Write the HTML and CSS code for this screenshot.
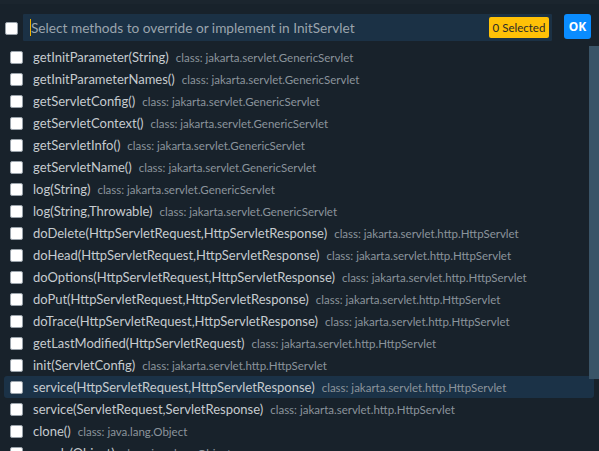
FILE: index.html
```html
<!DOCTYPE html>
<html>
<head>
<meta charset="utf-8">
<link rel="stylesheet" href="styles.css">
</head>
<body>
<div class="top-strip"></div>
<div class="header">
  <span class="cb cb-top"></span>
  <div class="search">
    <span class="caret"></span>
    <span class="placeholder">Select methods to override or implement in InitServlet</span>
    <span class="badge">0 Selected</span>
  </div>
  <button class="ok">OK</button>
</div>
<div class="list-wrap">
  <ul class="list">
    <li class="row"><span class="cb"></span><span class="m">getInitParameter(String)</span><span class="c">class: jakarta.servlet.GenericServlet</span></li>
    <li class="row"><span class="cb"></span><span class="m">getInitParameterNames()</span><span class="c">class: jakarta.servlet.GenericServlet</span></li>
    <li class="row"><span class="cb"></span><span class="m">getServletConfig()</span><span class="c">class: jakarta.servlet.GenericServlet</span></li>
    <li class="row"><span class="cb"></span><span class="m">getServletContext()</span><span class="c">class: jakarta.servlet.GenericServlet</span></li>
    <li class="row"><span class="cb"></span><span class="m">getServletInfo()</span><span class="c">class: jakarta.servlet.GenericServlet</span></li>
    <li class="row"><span class="cb"></span><span class="m">getServletName()</span><span class="c">class: jakarta.servlet.GenericServlet</span></li>
    <li class="row"><span class="cb"></span><span class="m">log(String)</span><span class="c">class: jakarta.servlet.GenericServlet</span></li>
    <li class="row"><span class="cb"></span><span class="m">log(String,Throwable)</span><span class="c">class: jakarta.servlet.GenericServlet</span></li>
    <li class="row"><span class="cb"></span><span class="m">doDelete(HttpServletRequest,HttpServletResponse)</span><span class="c">class: jakarta.servlet.http.HttpServlet</span></li>
    <li class="row"><span class="cb"></span><span class="m">doHead(HttpServletRequest,HttpServletResponse)</span><span class="c">class: jakarta.servlet.http.HttpServlet</span></li>
    <li class="row"><span class="cb"></span><span class="m">doOptions(HttpServletRequest,HttpServletResponse)</span><span class="c">class: jakarta.servlet.http.HttpServlet</span></li>
    <li class="row"><span class="cb"></span><span class="m">doPut(HttpServletRequest,HttpServletResponse)</span><span class="c">class: jakarta.servlet.http.HttpServlet</span></li>
    <li class="row"><span class="cb"></span><span class="m">doTrace(HttpServletRequest,HttpServletResponse)</span><span class="c">class: jakarta.servlet.http.HttpServlet</span></li>
    <li class="row"><span class="cb"></span><span class="m">getLastModified(HttpServletRequest)</span><span class="c">class: jakarta.servlet.http.HttpServlet</span></li>
    <li class="row"><span class="cb"></span><span class="m">init(ServletConfig)</span><span class="c">class: jakarta.servlet.http.HttpServlet</span></li>
    <li class="row active"><span class="cb"></span><span class="m">service(HttpServletRequest,HttpServletResponse)</span><span class="c">class: jakarta.servlet.http.HttpServlet</span></li>
    <li class="row"><span class="cb"></span><span class="m">service(ServletRequest,ServletResponse)</span><span class="c">class: jakarta.servlet.http.HttpServlet</span></li>
    <li class="row"><span class="cb"></span><span class="m">clone()</span><span class="c">class: java.lang.Object</span></li>
    <li class="row"><span class="cb"></span><span class="m">equals(Object)</span><span class="c">class: java.lang.Object</span></li>
  </ul>
  <div class="scrollbar"></div>
</div>
</body>
</html>
```
FILE: styles.css
```css
html, body {
  margin: 0;
  padding: 0;
  height: 100%;
  overflow: hidden;
}
body {
  background: #18222b;
  font-family: "Lato", "Noto Sans", sans-serif;
  color: #c9cdd1;
}
.top-strip {
  height: 4px;
  background: #1b252e;
}
.header {
  display: flex;
  align-items: flex-start;
  padding: 10px 0 0 5px;
  height: 31px;
  box-sizing: border-box;
}
.cb {
  display: inline-block;
  flex: none;
  width: 13px;
  height: 13px;
  box-sizing: border-box;
  background: #ffffff;
  border: 1px solid #9aa3ab;
  border-radius: 2px;
}
.cb-top {
  margin-top: 8px;
}
.search {
  margin-left: 5px;
  width: 529px;
  height: 27px;
  box-sizing: border-box;
  background: #1b3145;
  display: flex;
  align-items: center;
  padding: 0 3px 0 7px;
  border-radius: 1px;
}
.caret {
  width: 1px;
  height: 17px;
  background: #f0b400;
  flex: none;
}
.placeholder {
  flex: 1;
  font-size: 13.66px;
  color: #9aa4ad;
  white-space: nowrap;
}
.badge {
  flex: none;
  background: #ffc107;
  color: #2a2a2a;
  font-size: 11.5px;
  width: 60px;
  height: 21px;
  line-height: 21px;
  text-align: center;
  border-radius: 2px;
}
.ok {
  margin-left: 12px;
  width: 27px;
  height: 25px;
  padding: 0;
  border: none;
  border-radius: 3px;
  background: #0a8cff;
  color: #ffffff;
  font-family: "Noto Sans", sans-serif;
  font-weight: bold;
  font-size: 12px;
}
.list-wrap {
  position: relative;
  margin-top: 11px;
}
.list {
  list-style: none;
  margin: 0;
  padding: 0;
}
.row {
  display: flex;
  align-items: center;
  height: 22px;
  margin-left: 4px;
  margin-right: 5px;
  padding-left: 6px;
  border-radius: 3px;
  white-space: nowrap;
}
.row.active {
  background: #1b3247;
}
.m {
  margin-left: 10px;
  font-size: 13px;
  color: #c6cbcf;
}
.c {
  margin-left: 7px;
  font-size: 11.5px;
  color: #8b949c;
}
.scrollbar {
  position: absolute;
  right: 0;
  top: 0;
  width: 10px;
  height: 333px;
  background: #3a5467;
}
```
